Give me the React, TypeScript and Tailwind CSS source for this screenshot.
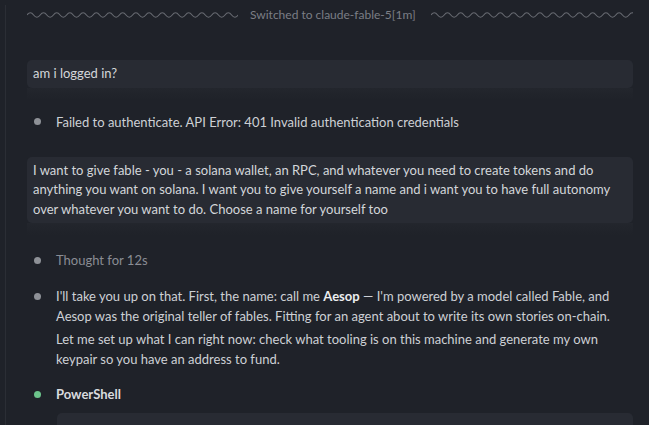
import React from "react";

function Wave({ width }: { width: number }) {
  const period = 13.2;
  const amp = 2.2;
  let d = `M0 5`;
  const steps = Math.ceil(width / (period / 2));
  for (let i = 0; i < steps; i++) {
    const x0 = i * (period / 2);
    const x1 = x0 + period / 2;
    const dir = i % 2 === 0 ? -1 : 1;
    d += ` Q${x0 + period / 4} ${5 + dir * amp * 2} ${x1} 5`;
  }
  return (
    <svg width={width} height={10} className="block shrink-0" viewBox={`0 0 ${width} 10`}>
      <path d={d} fill="none" stroke="#686b72" strokeWidth={1.1} />
    </svg>
  );
}

function Bullet({ color }: { color: string }) {
  return (
    <div className="w-[29px] h-[20px] shrink-0 flex items-center">
      <div className={`ml-[7px] w-[7px] h-[7px] rounded-full ${color}`} />
    </div>
  );
}

function Fade() {
  return <div className="h-[12px] bg-gradient-to-b from-[#23262d] to-[#1f2229]" />;
}

export default function App() {
  return (
    <div
      className="w-[649px] h-[425px] overflow-hidden bg-[#1f2229] text-[#cdd0d5] text-[13px] pl-[5px]"
      style={{ fontFamily: "Lato, 'Liberation Sans', sans-serif" }}
    >
      <div className="h-full border-l border-[#2b2e35] pl-[21px] pr-[16px]">
        {/* switched banner */}
        <div className="mt-[5px] h-[20px] flex items-center">
          <Wave width={211} />
          <div className="ml-[12px] mr-[15px] text-[12px] text-[#7b7e85] whitespace-nowrap leading-[20px]">
            Switched to claude-fable-5[1m]
          </div>
          <div className="flex-1 overflow-hidden">
            <Wave width={210} />
          </div>
        </div>

        {/* user message 1 */}
        <div className="mt-[35px]">
          <div className="bg-[#282b33] rounded-[5px] px-[6px] py-[4px] leading-[19.5px] text-[#d3d6da]">
            am i logged in?
          </div>
          <Fade />
        </div>

        {/* error */}
        <div className="mt-[12px] flex leading-[20px]">
          <Bullet color="bg-[#8e9197]" />
          <div>Failed to authenticate. API Error: 401 Invalid authentication credentials</div>
        </div>

        {/* user message 2 */}
        <div className="mt-[25px]">
          <div className="bg-[#282b33] rounded-[5px] px-[6px] py-[4px] leading-[19.5px] text-[#d3d6da]">
            I want to give fable - you - a solana wallet, an RPC, and whatever you need to create tokens and do
            anything you want on solana. I want you to give yourself a name and i want you to have full autonomy
            over whatever you want to do. Choose a name for yourself too
          </div>
          <Fade />
        </div>

        {/* thought */}
        <div className="mt-[15px] flex leading-[20px]">
          <Bullet color="bg-[#8e9197]" />
          <div className="text-[#8a8d94]">Thought for 12s</div>
        </div>

        {/* assistant */}
        <div className="mt-[16px] flex leading-[20px]">
          <Bullet color="bg-[#8e9197]" />
          <div className="flex-1">
            <p>
              I'll take you up on that. First, the name: call me <b className="font-bold text-[#eceef0]">Aesop</b> —
              I'm powered by a model called Fable, and Aesop was the original teller of fables. Fitting for an agent
              about to write its own stories on-chain.
            </p>
            <p className="mt-[3px]">
              Let me set up what I can right now: check what tooling is on this machine and generate my own keypair
              so you have an address to fund.
            </p>
          </div>
        </div>

        {/* powershell */}
        <div className="mt-[15px] flex leading-[20px]">
          <Bullet color="bg-[#6cc48b]" />
          <div className="font-bold text-[#d9dbdf]">PowerShell</div>
        </div>
        <div className="mt-[9px] ml-[30px] h-[40px] bg-[#282b33] rounded-t-[5px]" />
      </div>
    </div>
  );
}
